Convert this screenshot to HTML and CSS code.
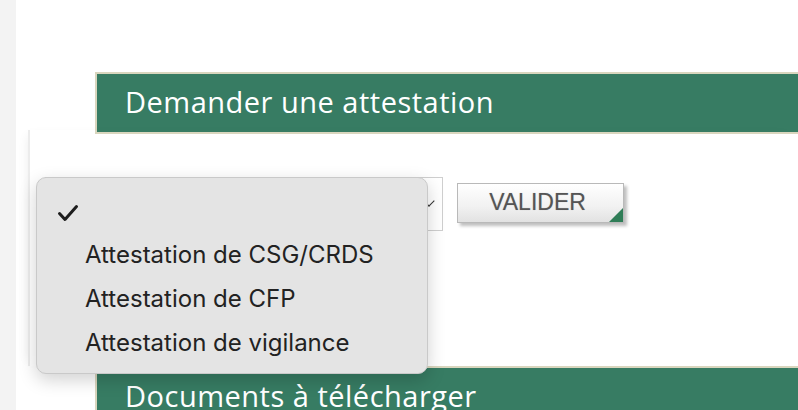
FILE: index.html
```html
<!DOCTYPE html>
<html lang="fr">

<head>
    <meta charset="UTF-8">
    <meta name="viewport" content="width=device-width, initial-scale=1.0">
    <title>Attestations</title>
    <link rel="stylesheet" href="styles.css">
</head>

<body>

    <div id="page">
        <div id="rail"></div>
        <div id="content">
            <h2 class="band">Demander une attestation</h2>
            <div id="panel">
                <form id="request-form">
                    <div id="type-select">
                        <span class="chevron"></span>
                    </div>
                    <button type="button" id="validate">VALIDER</button>
                </form>
            </div>
            <h2 class="band">Documents à télécharger</h2>
        </div>

        <ul id="menu">
            <li class="menu-item selected">
                <svg class="check" width="22" height="18" viewBox="0 0 22 18">
                    <path d="M2.5 9.5 L8 15.5 L19.5 2.5" fill="none" stroke="#1d1d1d" stroke-width="3" stroke-linecap="round" stroke-linejoin="round"/>
                </svg>
            </li>
            <li class="menu-item">Attestation de CSG/CRDS</li>
            <li class="menu-item">Attestation de CFP</li>
            <li class="menu-item">Attestation de vigilance</li>
        </ul>
    </div>

</body>

</html>
```

FILE: styles.css
```css
body {
    margin: 0;
    padding: 0;
    background-color: #ffffff;
    font-family: 'Open Sans', sans-serif;
    overflow: hidden;
}

#page {
    position: relative;
    display: flex;
    height: 410px;
}

#rail {
    width: 16px;
    background-color: #f3f3f3;
}

#content {
    flex: 1;
    padding-top: 72px;
    padding-left: 12px;
}

.band {
    margin: 0 0 0 67px;
    height: 58px;
    border: 2px solid #d9d6be;
    border-right: none;
    background-color: #377c63;
    color: #ffffff;
    font-family: 'Open Sans', sans-serif;
    font-weight: 500;
    font-size: 29px;
    letter-spacing: 0.5px;
    line-height: 56px;
    padding-left: 28px;
    white-space: nowrap;
}

#panel {
    margin-top: -4px;
    height: 236px;
    border-left: 2px solid #ececec;
    box-shadow: -6px 0 10px -6px rgba(0, 0, 0, 0.08);
}

#request-form {
    display: flex;
    align-items: flex-start;
    padding-top: 47px;
    padding-left: 15px;
}

#type-select {
    position: relative;
    width: 396px;
    height: 52px;
    border: 1px solid #cfcfcf;
    background-color: #ffffff;
}

.chevron {
    position: absolute;
    right: 9px;
    top: 19px;
    width: 7px;
    height: 7px;
    border-right: 1.5px solid #333;
    border-bottom: 1.5px solid #333;
    transform: rotate(45deg);
}

#validate {
    position: relative;
    margin-top: 6px;
    margin-left: 14px;
    width: 167px;
    height: 40px;
    border: 1px solid #b9b9b9;
    background: linear-gradient(#ffffff, #f1f1f1 60%, #e2e2e2);
    box-shadow: 3px 3px 3px rgba(0, 0, 0, 0.25);
    font-family: 'Liberation Sans', Arial, sans-serif;
    font-size: 23px;
    color: #555555;
    text-shadow: 0 0 1px rgba(0, 0, 0, 0.25);
    padding: 0 6px 1px 0;
}

#validate::after {
    content: '';
    position: absolute;
    right: 0;
    bottom: 0;
    border-left: 14px solid transparent;
    border-bottom: 14px solid #2f7d57;
}

#menu {
    position: absolute;
    left: 36px;
    top: 177px;
    width: 392px;
    height: 197px;
    box-sizing: border-box;
    margin: 0;
    padding: 11px 0 0 0;
    list-style: none;
    background-color: #e4e4e4;
    border: 1px solid #c9c9c9;
    border-radius: 10px;
    box-shadow: 0 6px 18px rgba(0, 0, 0, 0.18);
    font-family: 'Inter', sans-serif;
    font-size: 24px;
    color: #222222;
}

.menu-item {
    height: 44px;
    line-height: 44px;
    padding-left: 48px;
    position: relative;
}

.check {
    position: absolute;
    left: 20px;
    top: 15px;
}
```
